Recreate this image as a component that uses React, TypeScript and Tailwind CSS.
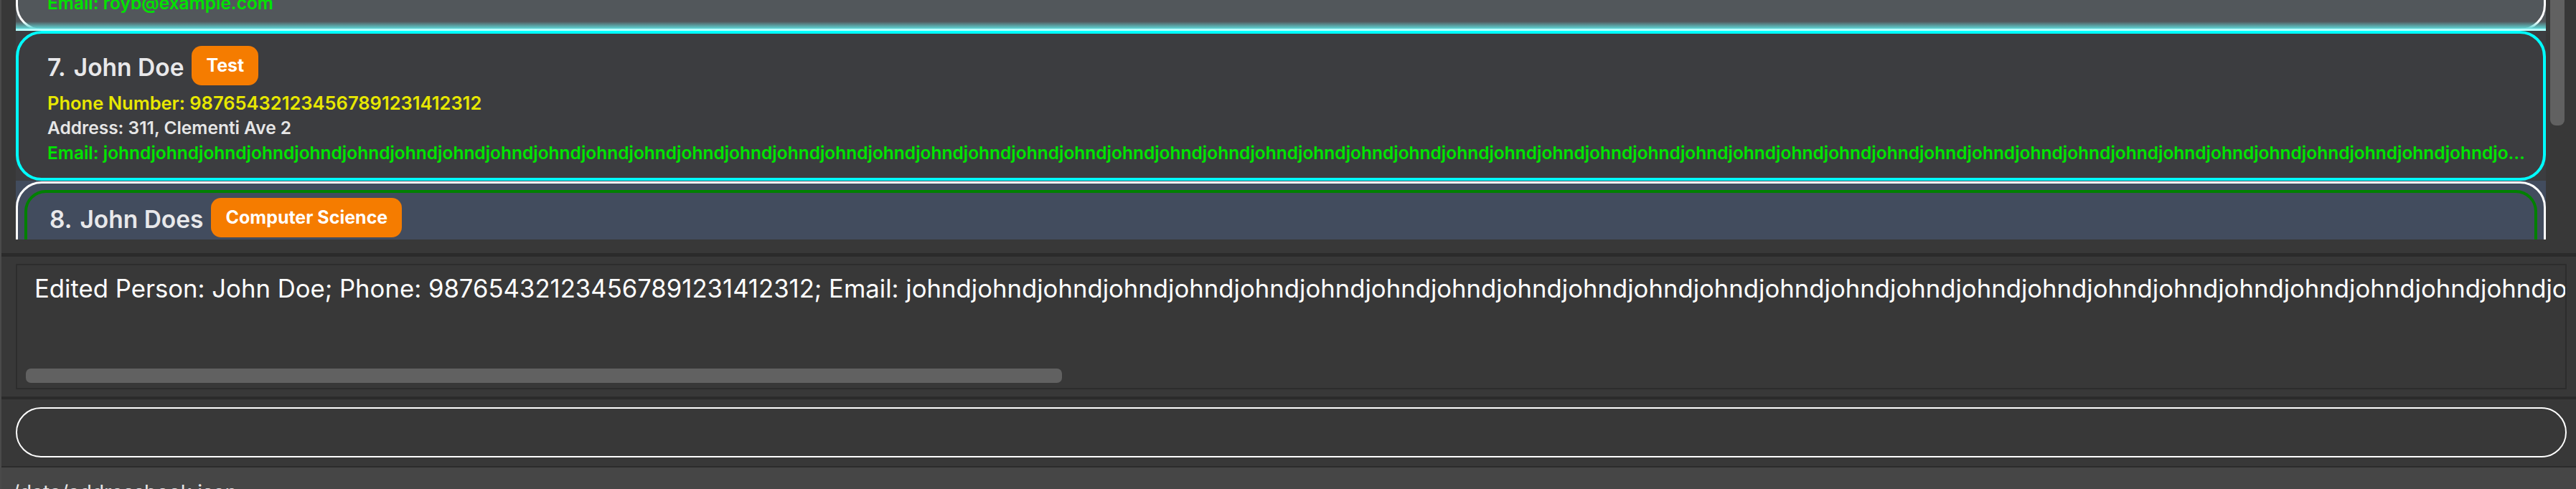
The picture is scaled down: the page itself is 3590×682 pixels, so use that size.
import React from "react";

const EMAIL = "johnd".repeat(260);
const PHONE = "987654321234567891231412312";

function Tag({ label }: { label: string }) {
  return (
    <div className="flex h-[55px] shrink-0 items-center rounded-[14px] bg-[#f57c00] px-[20px] text-[25px] font-bold leading-none text-white">
      {label}
    </div>
  );
}

function NameRow({ idx, name, tag }: { idx: string; name: string; tag: string }) {
  return (
    <div className="flex items-start gap-[11px]">
      <div className="mt-[3px] flex gap-[11px] whitespace-nowrap text-[33.5px] font-semibold leading-[55px] text-[#e8e8ea]">
        <span>{idx}</span>
        <span>{name}</span>
      </div>
      <Tag label={tag} />
    </div>
  );
}

function Details({ phone, address, email }: { phone: string; address: string; email: string }) {
  return (
    <div className="min-w-0 pr-[20px]">
      <div className="mt-[5px] whitespace-nowrap text-[25.5px] font-semibold leading-[34px] text-[#e8e800]">
        Phone Number: {phone}
      </div>
      <div className="whitespace-nowrap text-[24.5px] font-semibold leading-[35px] text-[#e6e6e6]">
        Address: {address}
      </div>
      <div className="overflow-hidden text-ellipsis whitespace-nowrap text-[24.5px] font-semibold leading-[35px] text-[#00e400]">
        Email: {email}
      </div>
    </div>
  );
}

export default function App() {
  return (
    <div
      className="flex h-[682px] w-[3590px] overflow-hidden bg-[#383838]"
      style={{ fontFamily: "Inter, 'Open Sans', 'Liberation Sans', sans-serif" }}
    >
      <div className="w-[2px] shrink-0 bg-[#4a4a4a]" />
      <div className="flex min-w-0 flex-1 flex-col">
        {/* List panel */}
        <div className="flex h-[353px] shrink-0 pl-[20px]">
          <div className="h-[334px] min-w-0 flex-1 overflow-hidden">
            {/* cell 6, scrolled mostly out of view */}
            <div className="relative mt-[-166px] h-[209px] bg-[#52575b]">
              <div className="h-[209px] rounded-[36px] border-[3px] border-white pl-[41px] pt-[18px]">
                <NameRow idx="6." name="Roy Balakrishnan" tag="colleagues" />
                <Details phone="92624417" address="Blk 45 Aljunied Street 85, #11-31" email="royb@example.com" />
              </div>
              <div className="absolute inset-x-0 bottom-[3px] h-[10px] bg-gradient-to-b from-transparent to-[#5fd6d6]" />
              <div className="absolute inset-x-0 bottom-0 h-[3px] bg-[#b8ffff]" />
            </div>
            {/* cell 7 */}
            <div className="h-[209px] bg-[#3c3d40]">
              <div className="h-[209px] rounded-[36px] border-[4px] border-[#00ffff] pl-[40px] pt-[17px]">
                <NameRow idx="7." name="John Doe" tag="Test" />
                <Details phone={PHONE} address="311, Clementi Ave 2" email={EMAIL} />
              </div>
            </div>
            {/* cell 8 */}
            <div className="h-[209px] bg-[#424c5e] pt-[1px]">
              <div className="h-[207px] rounded-[36px] border-[3px] border-white p-[9px]">
                <div className="h-full rounded-[30px] border-[4px] border-[#008000] pl-[31px] pt-[7px]">
                  <NameRow idx="8." name="John Does" tag="Computer Science" />
                </div>
              </div>
            </div>
          </div>
          {/* vertical scrollbar */}
          <div className="w-[42px] shrink-0 pl-[6px] pr-[16px]">
            <div className="h-[175px] rounded-b-[8px] bg-[#616161]" />
          </div>
        </div>

        <div className="h-[5px] shrink-0 bg-[#2b2b2b]" />

        {/* Result display */}
        <div className="h-[195px] shrink-0 pb-[10px] pl-[20px] pr-[13px] pt-[10px]">
          <div className="flex h-full flex-col justify-between overflow-hidden border-[2px] border-[#2d2d2d] pb-[7px]">
            <div className="whitespace-nowrap pl-[24px] pt-[12px] text-[34.7px] leading-[41px] text-white">
              Edited Person: John Doe; Phone: {PHONE}; Email: {EMAIL}
            </div>
            <div className="ml-[12px] h-[20px] w-[1444px] rounded-[7px] bg-[#616161]" />
          </div>
        </div>

        <div className="h-[4px] shrink-0 bg-[#2b2b2b]" />

        {/* Command box */}
        <div className="h-[93px] shrink-0 pl-[20px] pr-[13px] pt-[11px]">
          <div className="h-[70px] rounded-full border-[2px] border-white" />
        </div>

        <div className="h-[2px] shrink-0 bg-[#2b2b2b]" />

        {/* Status bar */}
        <div className="flex-1 bg-[#464646] pl-[15px] pt-[18px] text-[28px] leading-[34px] text-[#e6e6e6]">
          /data/addressbook.json
        </div>
      </div>
    </div>
  );
}
